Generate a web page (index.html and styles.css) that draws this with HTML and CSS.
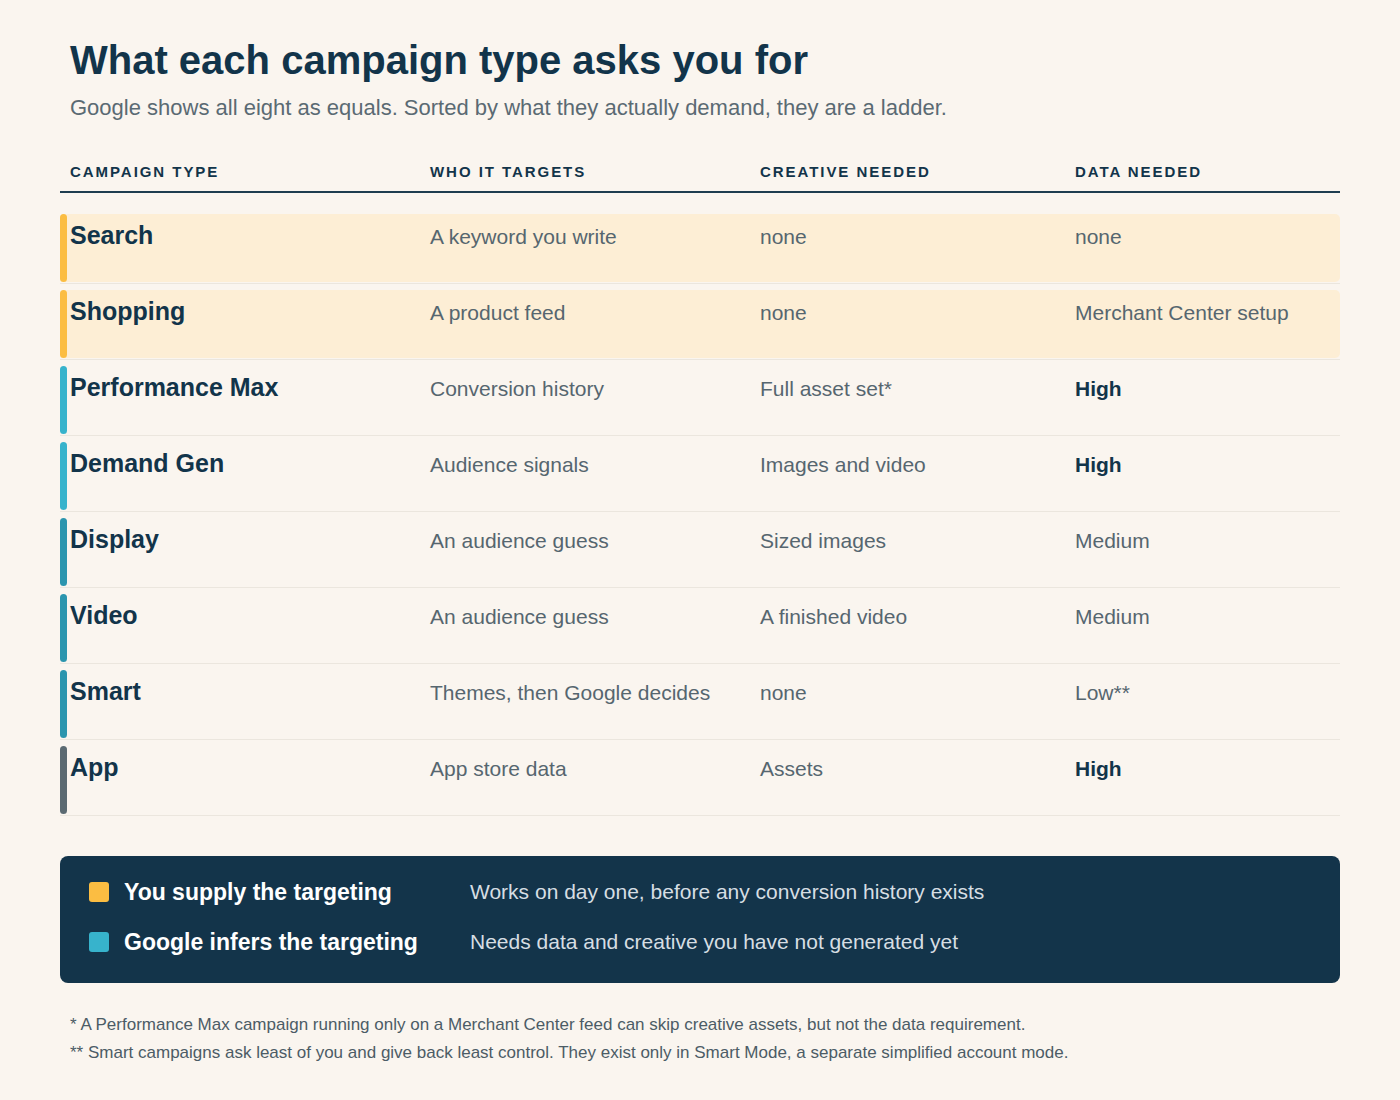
FILE: index.html
```html
<!DOCTYPE html>
<html lang="en">
<head>
<meta charset="utf-8">
<title>What each campaign type asks you for</title>
<link rel="stylesheet" href="styles.css">
</head>
<body>
<main class="page">
  <header class="intro">
    <h1 class="title">What each campaign type asks you for</h1>
    <p class="subtitle">Google shows all eight as equals. Sorted by what they actually demand, they are a ladder.</p>
  </header>

  <section class="table">
    <div class="thead">
      <div class="th">Campaign type</div>
      <div class="th">Who it targets</div>
      <div class="th">Creative needed</div>
      <div class="th">Data needed</div>
    </div>

    <div class="tbody">
      <div class="row">
        <div class="row-inner supply">
          <span class="bar bar-yellow"></span>
          <div class="cells">
            <div class="name">Search</div>
            <div class="cell">A keyword you write</div>
            <div class="cell">none</div>
            <div class="cell">none</div>
          </div>
        </div>
      </div>
      <div class="row">
        <div class="row-inner supply">
          <span class="bar bar-yellow"></span>
          <div class="cells">
            <div class="name">Shopping</div>
            <div class="cell">A product feed</div>
            <div class="cell">none</div>
            <div class="cell">Merchant Center setup</div>
          </div>
        </div>
      </div>
      <div class="row">
        <div class="row-inner">
          <span class="bar bar-cyan"></span>
          <div class="cells">
            <div class="name">Performance Max</div>
            <div class="cell">Conversion history</div>
            <div class="cell">Full asset set*</div>
            <div class="cell strong">High</div>
          </div>
        </div>
      </div>
      <div class="row">
        <div class="row-inner">
          <span class="bar bar-cyan"></span>
          <div class="cells">
            <div class="name">Demand Gen</div>
            <div class="cell">Audience signals</div>
            <div class="cell">Images and video</div>
            <div class="cell strong">High</div>
          </div>
        </div>
      </div>
      <div class="row">
        <div class="row-inner">
          <span class="bar bar-teal"></span>
          <div class="cells">
            <div class="name">Display</div>
            <div class="cell">An audience guess</div>
            <div class="cell">Sized images</div>
            <div class="cell">Medium</div>
          </div>
        </div>
      </div>
      <div class="row">
        <div class="row-inner">
          <span class="bar bar-teal"></span>
          <div class="cells">
            <div class="name">Video</div>
            <div class="cell">An audience guess</div>
            <div class="cell">A finished video</div>
            <div class="cell">Medium</div>
          </div>
        </div>
      </div>
      <div class="row">
        <div class="row-inner">
          <span class="bar bar-teal"></span>
          <div class="cells">
            <div class="name">Smart</div>
            <div class="cell">Themes, then Google decides</div>
            <div class="cell">none</div>
            <div class="cell">Low**</div>
          </div>
        </div>
      </div>
      <div class="row">
        <div class="row-inner">
          <span class="bar bar-gray"></span>
          <div class="cells">
            <div class="name">App</div>
            <div class="cell">App store data</div>
            <div class="cell">Assets</div>
            <div class="cell strong">High</div>
          </div>
        </div>
      </div>
    </div>
  </section>

  <section class="legend">
    <span class="swatch swatch-yellow"></span>
    <span class="legend-label">You supply the targeting</span>
    <span class="legend-desc">Works on day one, before any conversion history exists</span>
    <span class="swatch swatch-cyan"></span>
    <span class="legend-label">Google infers the targeting</span>
    <span class="legend-desc">Needs data and creative you have not generated yet</span>
  </section>

  <footer class="notes">
    <p class="note">* A Performance Max campaign running only on a Merchant Center feed can skip creative assets, but not the data requirement.</p>
    <p class="note">** Smart campaigns ask least of you and give back least control. They exist only in Smart Mode, a separate simplified account mode.</p>
  </footer>
</main>
</body>
</html>
```

FILE: styles.css
```css
* { box-sizing: border-box; }

html, body {
  margin: 0;
  padding: 0;
  background: #faf5ef;
}

body {
  font-family: "Liberation Sans", Arial, Helvetica, sans-serif;
  color: #12344a;
}

.page {
  width: 1280px;
  margin-left: 60px;
  padding-top: 36px;
  padding-bottom: 30px;
}

.intro {
  padding-left: 10px;
}

.title {
  margin: 0;
  font-size: 40px;
  line-height: 48px;
  font-weight: 700;
  color: #12344a;
}

.subtitle {
  margin: 10px 0 0;
  font-size: 22px;
  line-height: 28px;
  color: #5a6a73;
}

.table {
  margin-top: 40px;
}

.thead {
  display: grid;
  grid-template-columns: 360px 330px 315px 1fr;
  padding: 0 0 9px 10px;
  border-bottom: 2px solid #1e3d50;
}

.th {
  font-size: 15px;
  line-height: 20px;
  font-weight: 700;
  letter-spacing: 1.95px;
  text-transform: uppercase;
  color: #12344a;
}

.tbody {
  padding-top: 15px;
}

.row {
  margin-top: 6px;
  padding-bottom: 1px;
  border-bottom: 1px solid #ebe6de;
}

.row-inner {
  display: flex;
  height: 68px;
  border-radius: 5px;
}

.row-inner.supply {
  background: #fdeed5;
}

.bar {
  flex: 0 0 7px;
  width: 7px;
  border-radius: 4px;
  margin-right: 3px;
}

.bar-yellow { background: #fbbd42; }
.bar-cyan { background: #37b3cc; }
.bar-teal { background: #2b95ae; }
.bar-gray { background: #5b6a72; }

.cells {
  flex: 1;
  display: grid;
  grid-template-columns: 360px 330px 315px 1fr;
  align-items: baseline;
  align-content: start;
  padding-top: 6px;
}

.name {
  font-size: 25px;
  line-height: 30px;
  font-weight: 700;
  color: #12344a;
}

.cell {
  font-size: 21px;
  line-height: 28px;
  color: #56666f;
}

.cell.strong {
  font-weight: 700;
  color: #12344a;
}

.legend {
  margin-top: 40px;
  background: #13344a;
  border-radius: 8px;
  padding: 21px 28px 26px 29px;
  display: grid;
  grid-template-columns: 20px 331px 1fr;
  column-gap: 15px;
  row-gap: 20px;
  align-items: center;
}

.swatch {
  width: 20px;
  height: 20px;
  border-radius: 3px;
}

.swatch-yellow { background: #fbbd42; }
.swatch-cyan { background: #37b3cc; }

.legend-label {
  font-size: 23px;
  line-height: 30px;
  font-weight: 700;
  color: #ffffff;
}

.legend-desc {
  font-size: 21px;
  line-height: 30px;
  color: #d6dee3;
}

.notes {
  margin-top: 28px;
  padding-left: 10px;
}

.note {
  margin: 0;
  font-size: 17px;
  line-height: 28px;
  color: #4c5c66;
}
```
